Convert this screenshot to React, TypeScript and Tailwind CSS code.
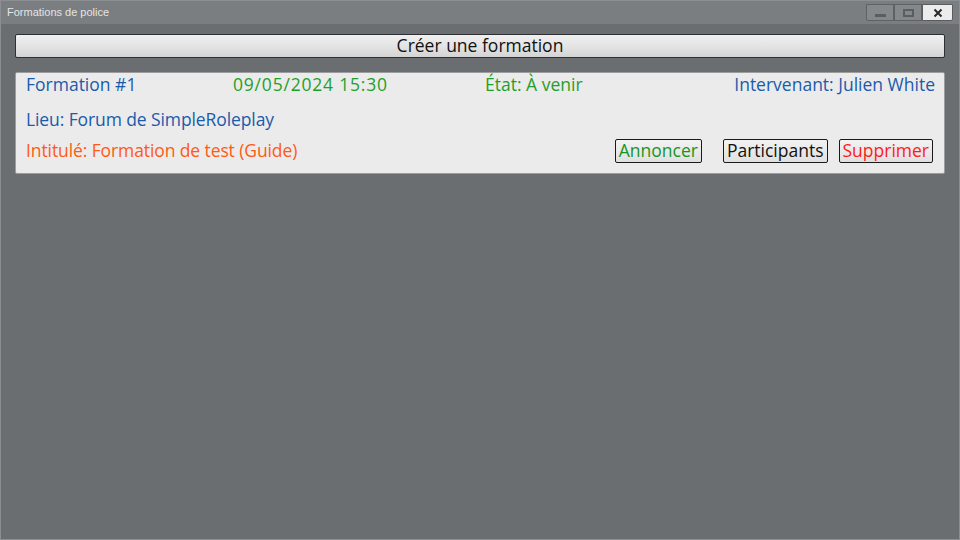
import React from "react";

const font = { fontFamily: '"Open Sans", "Noto Sans", sans-serif' };

function TitleButton({ kind }: { kind: "min" | "max" | "close" }) {
  if (kind === "close") {
    return (
      <div className="w-[31px] h-[17px] bg-[#ececec] border border-[#5a5d60] rounded-br-[2px] flex items-center justify-center">
        <svg width="10" height="10" viewBox="0 0 10 10">
          <path d="M1.5 1.5 L8.5 8.5 M8.5 1.5 L1.5 8.5" stroke="#2a2a2a" strokeWidth="2" />
        </svg>
      </div>
    );
  }
  return (
    <div
      className={`w-[28px] h-[17px] bg-[#85888b] border border-[#5f6265] flex items-center justify-center ${
        kind === "min" ? "rounded-bl-[2px]" : ""
      }`}
    >
      {kind === "min" ? (
        <div className="w-[11px] h-[3px] bg-[#5b5e61] mt-[5px]" />
      ) : (
        <div className="w-[11px] h-[8px] border-2 border-[#5b5e61]" />
      )}
    </div>
  );
}

function ActionButton({ label, color }: { label: string; color: string }) {
  return (
    <button
      className={`h-[24px] px-[3px] border border-[#1a1a1a] rounded-[2px] bg-gradient-to-b from-[#f2f2f2] to-[#e0e0e0] text-[17.5px] leading-none ${color}`}
      style={font}
    >
      {label}
    </button>
  );
}

export default function App() {
  return (
    <div className="w-[960px] h-[540px] bg-[#6b6e71] border border-[#8c8f92] flex flex-col overflow-hidden">
      {/* Title bar */}
      <div className="h-[24px] bg-[#7b7e81] border-b border-[#6a6d70] flex items-start justify-between pl-[6px] pr-[6px]">
        <span
          className="text-[11px] text-[#e4e4e4] mt-[6px] leading-none"
          style={{ fontFamily: '"Liberation Sans", Arial, sans-serif' }}
        >
          Formations de police
        </span>
        <div className="flex mt-[3px]">
          <TitleButton kind="min" />
          <TitleButton kind="max" />
          <TitleButton kind="close" />
        </div>
      </div>

      <div className="flex flex-col px-[14px] pt-[9px]">
        {/* Create button */}
        <button
          className="h-[24px] w-full border border-[#2e3033] rounded-[2px] bg-gradient-to-b from-[#f0f0f0] via-[#e4e4e4] to-[#d4d4d4] text-[17.5px] text-[#111] leading-none"
          style={font}
        >
          Créer une formation
        </button>

        {/* Formation card */}
        <div
          className="mt-[14px] h-[102px] bg-[#ebebeb] border border-[#9a9c9e] rounded-[2px] pl-[10px] pr-[9px] flex flex-col text-[17.5px] leading-none"
          style={font}
        >
          <div className="grid grid-cols-[207px_252px_1fr_auto] items-center h-[24px]">
            <span className="text-[#1a5bab]">Formation #1</span>
            <span className="text-[#1fa02a] tracking-[0.8px]">09/05/2024 15:30</span>
            <span className="text-[#1fa02a]">État: À venir</span>
            <span className="text-[#1a5bab]">Intervenant: Julien White</span>
          </div>
          <div className="h-[34px] flex items-center mt-[6px]">
            <span className="text-[#1a5bab] tracking-[-0.1px]">Lieu: Forum de SimpleRoleplay</span>
          </div>
          <div className="flex items-center justify-between mt-[2px]">
            <span className="text-[#ff5a14] tracking-[-0.1px]">Intitulé: Formation de test (Guide)</span>
            <div className="flex items-center mr-[2px]">
              <ActionButton label="Annoncer" color="text-[#16961e]" />
              <div className="w-[21px]" />
              <ActionButton label="Participants" color="text-[#111]" />
              <div className="w-[11px]" />
              <ActionButton label="Supprimer" color="text-[#ff1a1a]" />
            </div>
          </div>
        </div>
      </div>
    </div>
  );
}
